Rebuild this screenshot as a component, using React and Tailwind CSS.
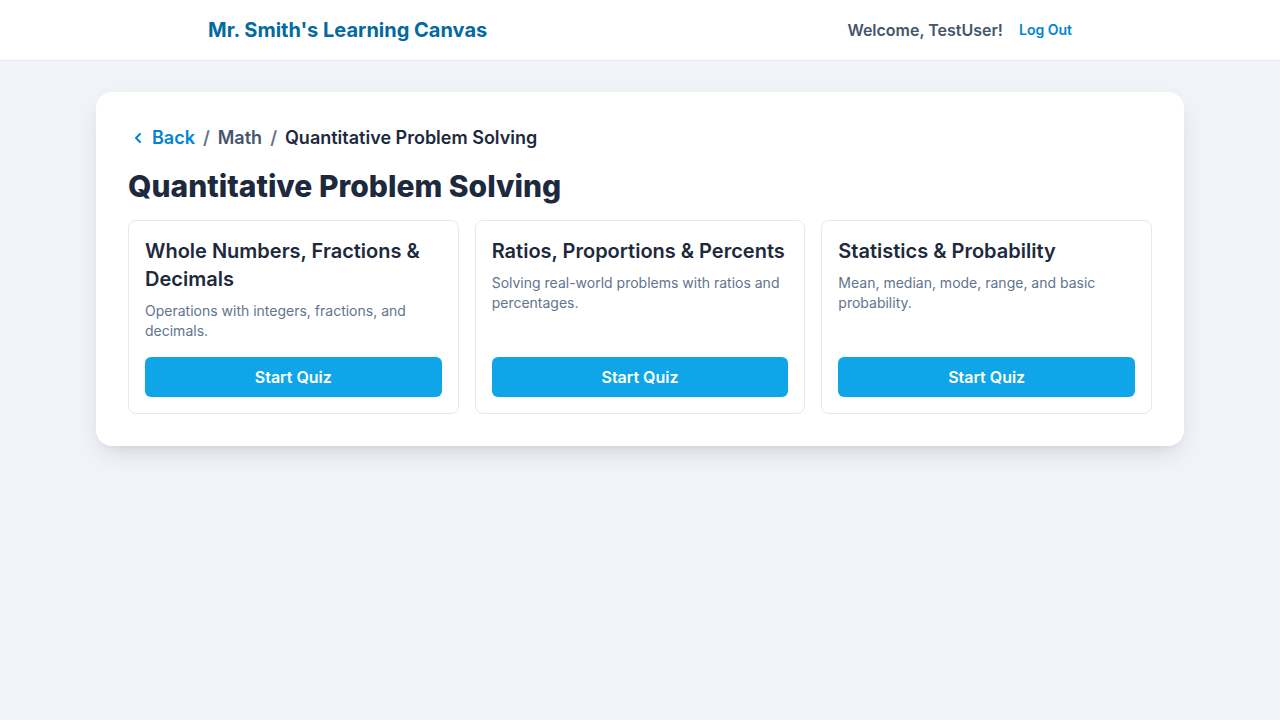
import React from "react";

const topics = [
  {
    title: "Whole Numbers, Fractions & Decimals",
    desc: "Operations with integers, fractions, and decimals.",
  },
  {
    title: "Ratios, Proportions & Percents",
    desc: "Solving real-world problems with ratios and percentages.",
  },
  {
    title: "Statistics & Probability",
    desc: "Mean, median, mode, range, and basic probability.",
  },
];

export default function App() {
  return (
    <div
      className="min-h-screen bg-[#f0f4f8]"
      style={{ fontFamily: "Inter, 'Noto Sans', sans-serif" }}
    >
      <header className="bg-white border-b border-slate-200 h-[61px]">
        <div className="max-w-4xl mx-auto px-4 h-full flex items-center justify-between">
          <div className="text-xl font-bold text-[#0369a1]">
            Mr. Smith's Learning Canvas
          </div>
          <div className="flex items-center gap-4">
            <span className="text-base font-semibold text-slate-600">
              Welcome, TestUser!
            </span>
            <span className="text-sm font-semibold text-sky-600">Log Out</span>
          </div>
        </div>
      </header>
      <main className="max-w-6xl mx-auto px-8 pt-[31px]">
        <div className="bg-white rounded-2xl p-8 shadow-[0_10px_25px_-5px_rgba(0,0,0,0.12),0_6px_10px_-6px_rgba(0,0,0,0.08)]">
          <nav className="flex items-center text-lg font-semibold mb-4">
            <span className="flex items-center text-sky-600">
              <svg
                width="16"
                height="16"
                viewBox="0 0 24 24"
                fill="none"
                stroke="currentColor"
                strokeWidth="3"
                strokeLinecap="round"
                strokeLinejoin="round"
                className="mr-[6px] ml-[2px]"
              >
                <path d="M15 18l-6-6 6-6" />
              </svg>
              Back
            </span>
            <span className="mx-2 text-slate-500">/</span>
            <span className="text-slate-600">Math</span>
            <span className="mx-2 text-slate-500">/</span>
            <span className="text-slate-800">Quantitative Problem Solving</span>
          </nav>
          <h1 className="text-3xl font-extrabold text-slate-800 mb-4">
            Quantitative Problem Solving
          </h1>
          <div className="grid grid-cols-3 gap-4">
            {topics.map((t) => (
              <div
                key={t.title}
                className="border border-slate-200 rounded-lg p-4 flex flex-col"
              >
                <h2 className="text-xl font-semibold text-slate-800 mb-2">
                  {t.title}
                </h2>
                <p className="text-sm text-slate-500 mb-4">{t.desc}</p>
                <button className="mt-auto h-10 w-full rounded-md bg-[#0ea5e9] text-white font-semibold text-base">
                  Start Quiz
                </button>
              </div>
            ))}
          </div>
        </div>
      </main>
    </div>
  );
}
